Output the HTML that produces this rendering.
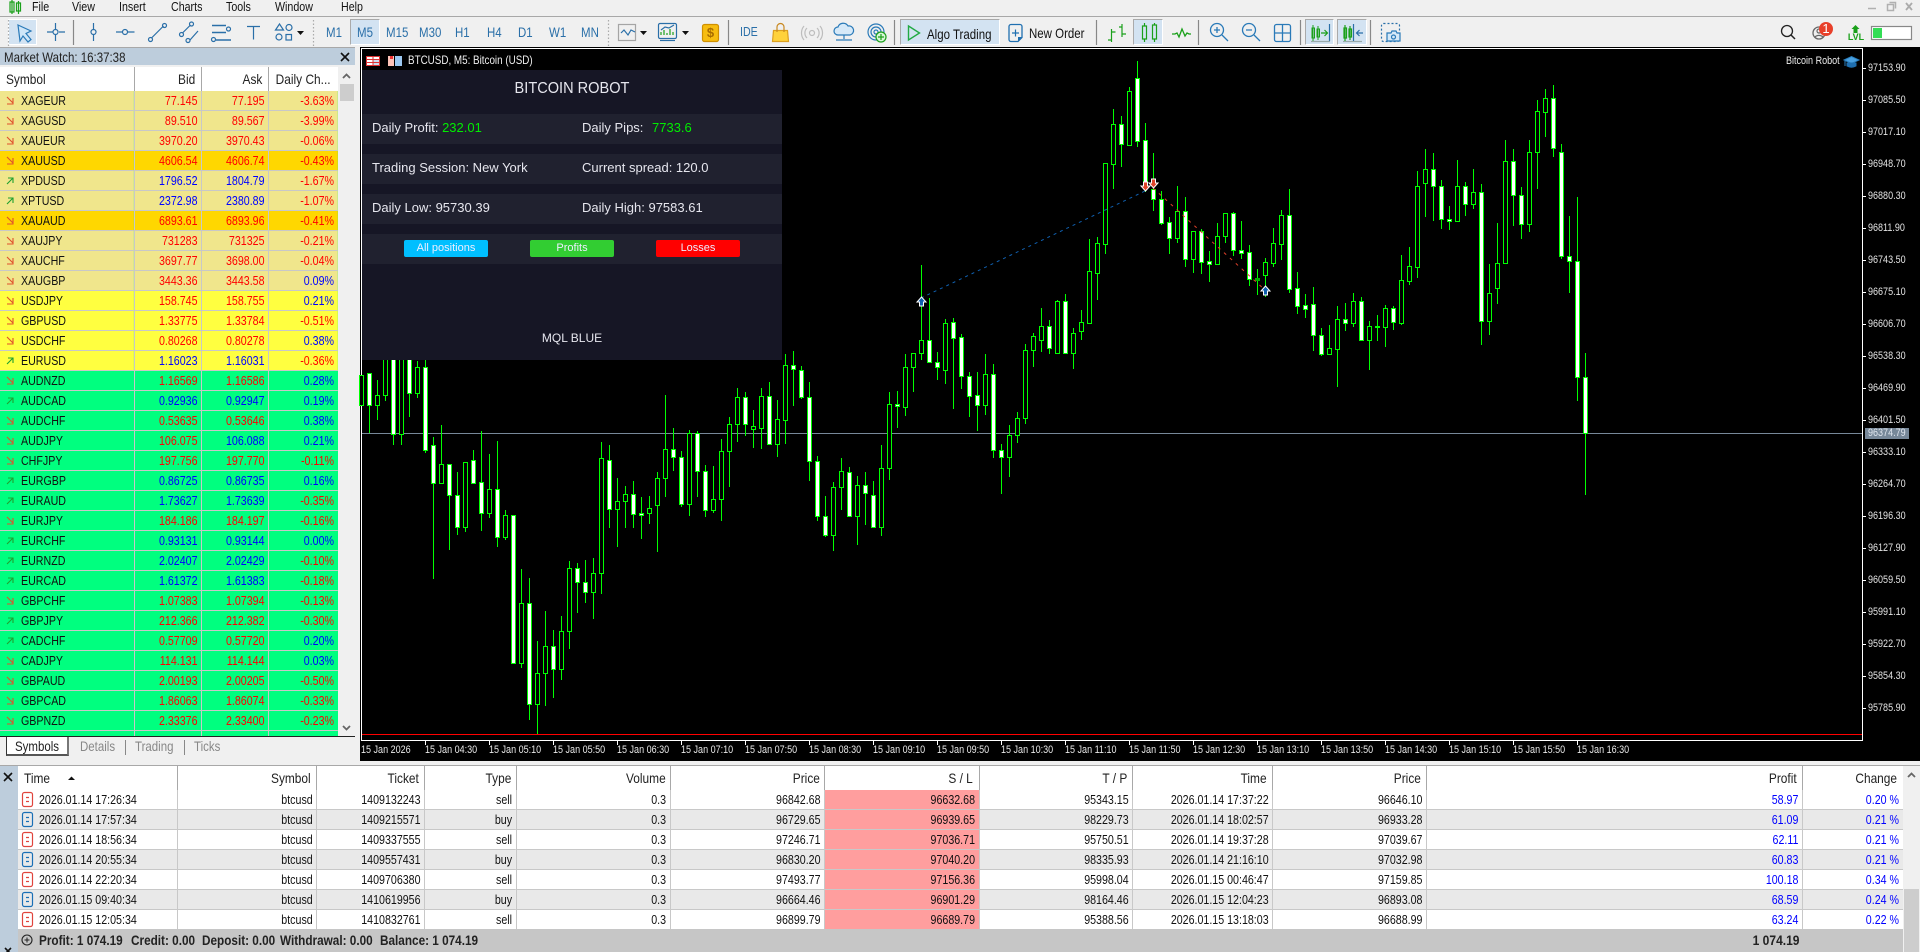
<!DOCTYPE html>
<html><head><meta charset="utf-8"><title>MT5</title>
<style>
html,body{margin:0;padding:0;width:1920px;height:952px;overflow:hidden;background:#f0f0f0;font-family:"Liberation Sans",Arial,sans-serif;color:#111}
.ab{position:absolute}
.t{position:absolute;transform-origin:0 50%;transform:scaleX(.82);white-space:nowrap;font-size:13px;line-height:16px}
.tb{color:#2a6fa8}
.tf{font-size:14px}
.sm{font-size:14px;font-weight:bold;color:#222;transform:scaleX(.84);top:932px}
.pa{position:absolute;left:1868px;transform-origin:0 50%;transform:scaleX(.82);font-size:11px;line-height:12px;color:#e4e4e4;white-space:nowrap}
.ta{position:absolute;top:744px;transform-origin:0 50%;transform:scaleX(.82);font-size:11px;line-height:12px;color:#e8e8e8;white-space:nowrap}
.p{position:absolute;font-size:13px;line-height:16px;color:#e6e6ee;white-space:nowrap}
.p b{font-weight:normal;color:#0e0}
.rw{position:absolute;left:362px;width:420px;height:30px;background:#20212f}
.bn{position:absolute;top:240px;width:84px;height:17px;line-height:17px;text-align:center;font-size:11px;color:#eef;border-radius:2px}
.sq{position:absolute;transform-origin:0 0;transform:scaleX(.82);table-layout:fixed;border-collapse:separate;border-spacing:0;font-size:13px}
.sq td{height:19px;line-height:18px;padding:0 4.9px 0 0;border-bottom:1px solid #c8c8c8;white-space:nowrap;overflow:hidden}
#mw td:first-child{padding-left:25.6px}
#mw td+td{text-align:right}
.k td{background:#f0e68c}.g td{background:#ffd700}.y td{background:#ffff40}.s td{background:#00ff7f}
.R{color:#f00}.B{color:#00f}
#bt td{text-align:right}
#bt td:first-child{text-align:left;padding-left:25.6px}
#bt tr:nth-child(odd) td{background:#fff}
#bt tr:nth-child(even) td{background:#e9e9e9}
#bt tr:nth-child(n) td.L{background:#ff9e9e}
.hd{position:absolute;top:778px;transform-origin:100% 50%;transform:scaleX(.85);margin-top:-8px;font-size:14px;line-height:16px;color:#222;white-space:nowrap}
.ln{position:absolute;width:1px}
svg{position:absolute;left:0;top:0}
</style></head><body>

<!-- menu and toolbar -->
<div class="ab" style="left:0;top:16px;width:1920px;height:1px;background:#a8a8a8"></div>
<div class="t" style="left:32px;top:-1px">File</div>
<div class="t" style="left:72px;top:-1px">View</div>
<div class="t" style="left:119px;top:-1px">Insert</div>
<div class="t" style="left:171px;top:-1px">Charts</div>
<div class="t" style="left:226px;top:-1px">Tools</div>
<div class="t" style="left:275px;top:-1px">Window</div>
<div class="t" style="left:341px;top:-1px">Help</div>

<div class="ab" style="left:8px;top:19px;width:29px;height:26px;background:#d3e3f2;border:1px solid #fff;box-sizing:border-box"></div>
<div class="ab" style="left:350px;top:19px;width:30px;height:26px;background:#d3e3f2;border:1px solid #fff;border-left-color:#aaa;border-top-color:#aaa;box-sizing:border-box"></div>
<div class="ab" style="left:900px;top:19px;width:100px;height:26px;background:#d3e3f2;border:1px solid #fff;border-left-color:#aaa;border-top-color:#aaa;box-sizing:border-box"></div>
<div class="ab" style="left:1133px;top:19px;width:30px;height:26px;background:#d3e3f2;border:1px solid #fff;border-left-color:#aaa;border-top-color:#aaa;box-sizing:border-box"></div>
<div class="ab" style="left:1305px;top:19px;width:29px;height:26px;background:#d3e3f2;border:1px solid #fff;border-left-color:#aaa;border-top-color:#aaa;box-sizing:border-box"></div>
<div class="ab" style="left:1337px;top:19px;width:30px;height:26px;background:#d3e3f2;border:1px solid #fff;border-left-color:#aaa;border-top-color:#aaa;box-sizing:border-box"></div>

<div class="t tb tf" style="left:326px;top:24px">M1</div>
<div class="t tb tf" style="left:357px;top:24px">M5</div>
<div class="t tb tf" style="left:386px;top:24px">M15</div>
<div class="t tb tf" style="left:419px;top:24px">M30</div>
<div class="t tb tf" style="left:455px;top:24px">H1</div>
<div class="t tb tf" style="left:487px;top:24px">H4</div>
<div class="t tb tf" style="left:518px;top:24px">D1</div>
<div class="t tb tf" style="left:549px;top:24px">W1</div>
<div class="t tb tf" style="left:581px;top:24px">MN</div>
<div class="t tb" style="left:740px;top:24px">IDE</div>
<div class="t" style="left:927px;top:26px;font-size:14px">Algo Trading</div>
<div class="t" style="left:1029px;top:25px;font-size:14px">New Order</div>

<svg width="1920" height="48" fill="none" stroke-width="1.2">
<!-- logo -->
<g stroke="#1aa01a"><path d="M10 2h4v10h-4zM12 0v14M16.500 3h4v8h-4zM18.500 1v13"/></g>
<!-- grips -->
<path d="M8.500 20v26M313.500 20v26M608.500 20v26" stroke="#aaa" stroke-dasharray="1.500 2"/>
<!-- seps -->
<path d="M73.500 20v25M728.500 20v25M894.500 20v25M1096.500 20v25M1198.500 20v25M1300.500 20v25M1370.500 20v25" stroke="#888"/>
<!-- cursor -->
<path d="M18 25l13 6-5 2.500 5 6-3 2.500-5-6-3 5z" stroke="#2a7ab8" fill="#cfe6f8"/>
<g stroke="#2a6fa8">
<path d="M47 32h6M59 32h6M55.500 23v6M55.500 35v6"/><circle cx="55.500" cy="32" r="2.500"/>
<path d="M93.500 23v6.500M93.500 34.500v6.500"/><circle cx="93.500" cy="32" r="2.500"/>
<path d="M116 32h6.500M127.500 32h7"/><circle cx="125" cy="32" r="2.500"/>
<path d="M151.500 38l12-12"/><circle cx="150.500" cy="39.500" r="2"/><circle cx="164.500" cy="25.500" r="2"/>
<path d="M182.500 33l8-8M190 40l8-9"/><circle cx="181.500" cy="34.500" r="2"/><circle cx="191.500" cy="24" r="2"/><circle cx="188" cy="40.500" r="2"/>
<path d="M212 25.500h14M212 32.500h14M216 40h15" stroke-width="1.500"/><circle cx="228.500" cy="29" r="2"/><circle cx="213.500" cy="39.500" r="2"/>
<path d="M247 26.500h13M253.500 26.500v13"/>
<path d="M275.500 30l4-6 4 6z"/><circle cx="289" cy="27.500" r="3"/><circle cx="279" cy="37" r="3"/><rect x="286" y="34.500" width="5.500" height="5.500"/>
</g>
<path d="M297 31h7l-3.500 4zM640 31h7l-3.500 4zM682 31h7l-3.500 4z" fill="#111" stroke="none"/>
<!-- chart icons -->
<rect x="618.500" y="24.500" width="17" height="16" stroke="#a5a5a5"/><path d="M621 33l3-3 4 5 3-5 4 2" stroke="#2a6fa8"/>
<rect x="658.500" y="23.500" width="18" height="15" rx="1.500" stroke="#2a6fa8"/><path d="M661 35v-3M664 35v-5M667 35v-2M670 35v-6M673 35v-3" stroke="#1aa01a"/><path d="M661 30l4-3 4 1 5-3" stroke="#2a6fa8"/><path d="M660 40.500h15" stroke="#2a6fa8"/>
<rect x="702.500" y="24.500" width="16" height="17" rx="2" fill="#f7bd10" stroke="#d09000"/>
<path d="M773.500 30.500h14l1 11h-16z" fill="#ffd23c" stroke="#dca020"/><path d="M777 32v-5a3.500 3.500 0 0 1 7 0v5" stroke="#c88820"/>
<g stroke="#bdbdbd"><circle cx="812" cy="33" r="2.500"/><path d="M807 28a7 7 0 0 0 0 10M817 28a7 7 0 0 1 0 10M804 26a11 11 0 0 0 0 14M820 26a11 11 0 0 1 0 14"/></g>
<g stroke="#2a7ab8"><path d="M838 35a4 4 0 0 1 0-8 5.500 5.500 0 0 1 10-1 4.500 4.500 0 0 1 2 9z" fill="#d6e9f8"/><path d="M844 35v4M836 40h16"/></g>
<g stroke="#2a7ab8"><circle cx="876" cy="32" r="8"/><circle cx="876" cy="32" r="5"/><circle cx="876" cy="32" r="2"/></g>
<circle cx="881" cy="37" r="5" fill="#d8f5d8" stroke="#1aa01a"/><path d="M878 37h6M881 34v6" stroke="#1aa01a"/>
<path d="M908.500 26l11 7-11 7z" stroke="#22aa44" stroke-width="1.400"/>
<path d="M1011 24.500h9a2 2 0 0 1 2 2v11l-4 4h-7a2 2 0 0 1-2-2v-13a2 2 0 0 1 2-2z" stroke="#1f6fb0" stroke-width="1.300"/><path d="M1012 33h7M1015.500 29.500v7" stroke="#1f6fb0"/><path d="M1018 41l4-4h-4z" fill="#1f6fb0" stroke="none"/>
<g stroke="#1aa01a"><path d="M1111.500 29v13M1108 40h3.500M1111.500 32h4M1122 24v13M1119 27h3M1122 34h4"/>
<path d="M1143 27h4v13h-4zM1153 26h4v14h-4zM1145 24v3M1145 40v3M1155 24v2M1155 40v3" transform="translate(-.5 -1)"/>
<path d="M1172 34h3l2-1 2 4 3-8 3 7 2-3 2 1h2" stroke-width="1.300"/></g>
<g stroke="#2a7ab8" stroke-width="1.300"><circle cx="1217" cy="30" r="6.500"/><path d="M1214 30h6M1217 27v6M1222 35l6 6"/><circle cx="1249" cy="30" r="6.500"/><path d="M1246 30h6M1254 35l6 6"/>
<rect x="1274.500" y="24.500" width="16" height="17" rx="2"/><path d="M1274.500 33h16M1282.500 24.500v17"/></g>
<g stroke="#1aa01a"><path d="M1312 28h2.500v10h-2.500zM1317 29h2.500v8h-2.500zM1313 25v16M1318 26v14" stroke-width="1"/><path d="M1321 33h6M1324.500 30l3 3-3 3"/></g>
<path d="M1329.500 24v17" stroke="#2a6fa8"/><path d="M1311 41.500h19M1343 41.500h19" stroke="#9aa"/>
<g stroke="#1aa01a"><path d="M1344 28h2.500v10H1344zM1349 29h2.500v8H1349zM1345 25v16M1350 26v14"/></g>
<path d="M1353.500 24v17M1363 33h-6M1359.500 30l-3 3 3 3" stroke="#2a6fa8"/>
<rect x="1381.500" y="23.500" width="18" height="18" rx="2" stroke="#2a6fa8" stroke-dasharray="2 2"/>
<path d="M1387 33h4l1-2h4l1 2h3v8h-13z" fill="#d6e9f8" stroke="#2a7ab8"/><circle cx="1393.500" cy="37" r="2" stroke="#2a7ab8"/>
<!-- right -->
<circle cx="1787" cy="31" r="5.500" stroke="#222" stroke-width="1.300"/><path d="M1791 35l4 4" stroke="#222" stroke-width="1.500"/>
<circle cx="1819" cy="33" r="6" stroke="#666" stroke-width="1.300"/><circle cx="1819" cy="31" r="2" stroke="#666"/><path d="M1815 37a5 4 0 0 1 8 0" stroke="#666"/>
<circle cx="1826" cy="29" r="7" fill="#e8402a"/>
<path d="M1855.500 25l4 4h-2v4h-4v-4h-2z" fill="#1aa01a" stroke="none"/>
<rect x="1871.500" y="26.500" width="40" height="13" fill="#fff" stroke="#888"/><rect x="1873" y="28" width="9" height="10" fill="#3d5" />
<path d="M1868 8.500h8M1887.500 4.500h6v6h-6zM1889.500 2.500h6v6" stroke="#b0b0b0" stroke-width="1.500"/><path d="M1906 3l6 7M1912 3l-6 7" stroke="#aaa" stroke-width="1.800"/>
</svg>
<div class="ab" style="left:702px;top:24px;width:17px;height:18px;line-height:18px;text-align:center;font-size:13px;font-weight:bold;color:#a86c00">$</div>
<div class="ab" style="left:1819px;top:21px;width:14px;height:16px;line-height:16px;text-align:center;font-size:13px;color:#fff">1</div>
<div class="ab" style="left:1846px;top:32px;width:20px;height:10px;line-height:10px;text-align:center;font-size:9px;color:#1aa01a;font-weight:bold">LVL</div>

<!-- market watch -->
<div class="ab" style="left:0;top:47px;width:355px;height:1px;background:#a8a8a8"></div>
<div class="ab" style="left:0;top:48px;width:355px;height:17px;background:#bdcddc"></div>
<div class="t" style="left:4px;top:49px;color:#222;font-size:14px">Market Watch: 16:37:38</div>
<svg width="360" height="70"><path d="M341 53l8 8M349 53l-8 8" stroke="#111" stroke-width="1.600"/></svg>
<div class="ab" style="left:0;top:67px;width:338px;height:24px;background:#fff"></div>
<div class="t tf" style="left:6px;top:71px;color:#222;transform:scaleX(.85)">Symbol</div>
<div class="hd" style="right:1725px;top:79px">Bid</div>
<div class="hd" style="right:1658px;top:79px">Ask</div>
<div class="hd" style="right:1589px;top:79px">Daily Ch...</div>
<div class="ab" style="left:338px;top:67px;width:17px;height:669px;background:#f0f0f0"></div>
<div class="ab" style="left:340px;top:84px;width:14px;height:17px;background:#cdcdcd"></div>
<svg width="360" height="740" fill="none"><path d="M343 78l3.500-3.500 3.500 3.500M343 726l3.500 3.500 3.500-3.500" stroke="#666" stroke-width="1.800"/></svg>
<div class="ab" style="left:0;top:91px;width:338px;height:645px;overflow:hidden;background:#00ff7f">
<table id="mw" class="sq" style="left:0;top:0;width:412.2px">
<colgroup><col style="width:163.4px"><col style="width:82.4px"><col style="width:81.7px"><col style="width:84.7px"></colgroup>
<tr class="k"><td>XAGEUR<td class="R">77.145<td class="R">77.195<td class="R">-3.63%</tr>
<tr class="k"><td>XAGUSD<td class="R">89.510<td class="R">89.567<td class="R">-3.99%</tr>
<tr class="k"><td>XAUEUR<td class="R">3970.20<td class="R">3970.43<td class="R">-0.06%</tr>
<tr class="g"><td>XAUUSD<td class="R">4606.54<td class="R">4606.74<td class="R">-0.43%</tr>
<tr class="k"><td>XPDUSD<td class="B">1796.52<td class="B">1804.79<td class="R">-1.67%</tr>
<tr class="k"><td>XPTUSD<td class="B">2372.98<td class="B">2380.89<td class="R">-1.07%</tr>
<tr class="g"><td>XAUAUD<td class="R">6893.61<td class="R">6893.96<td class="R">-0.41%</tr>
<tr class="k"><td>XAUJPY<td class="R">731283<td class="R">731325<td class="R">-0.21%</tr>
<tr class="k"><td>XAUCHF<td class="R">3697.77<td class="R">3698.00<td class="R">-0.04%</tr>
<tr class="k"><td>XAUGBP<td class="R">3443.36<td class="R">3443.58<td class="B">0.09%</tr>
<tr class="y"><td>USDJPY<td class="R">158.745<td class="R">158.755<td class="B">0.21%</tr>
<tr class="y"><td>GBPUSD<td class="R">1.33775<td class="R">1.33784<td class="R">-0.51%</tr>
<tr class="y"><td>USDCHF<td class="R">0.80268<td class="R">0.80278<td class="B">0.38%</tr>
<tr class="y"><td>EURUSD<td class="B">1.16023<td class="B">1.16031<td class="R">-0.36%</tr>
<tr class="s"><td>AUDNZD<td class="R">1.16569<td class="R">1.16586<td class="B">0.28%</tr>
<tr class="s"><td>AUDCAD<td class="B">0.92936<td class="B">0.92947<td class="B">0.19%</tr>
<tr class="s"><td>AUDCHF<td class="R">0.53635<td class="R">0.53646<td class="B">0.38%</tr>
<tr class="s"><td>AUDJPY<td class="R">106.075<td class="B">106.088<td class="B">0.21%</tr>
<tr class="s"><td>CHFJPY<td class="R">197.756<td class="R">197.770<td class="R">-0.11%</tr>
<tr class="s"><td>EURGBP<td class="B">0.86725<td class="B">0.86735<td class="B">0.16%</tr>
<tr class="s"><td>EURAUD<td class="B">1.73627<td class="B">1.73639<td class="R">-0.35%</tr>
<tr class="s"><td>EURJPY<td class="R">184.186<td class="R">184.197<td class="R">-0.16%</tr>
<tr class="s"><td>EURCHF<td class="B">0.93131<td class="B">0.93144<td class="B">0.00%</tr>
<tr class="s"><td>EURNZD<td class="B">2.02407<td class="B">2.02429<td class="R">-0.10%</tr>
<tr class="s"><td>EURCAD<td class="B">1.61372<td class="B">1.61383<td class="R">-0.18%</tr>
<tr class="s"><td>GBPCHF<td class="R">1.07383<td class="R">1.07394<td class="R">-0.13%</tr>
<tr class="s"><td>GBPJPY<td class="R">212.366<td class="R">212.382<td class="R">-0.30%</tr>
<tr class="s"><td>CADCHF<td class="R">0.57709<td class="R">0.57720<td class="B">0.20%</tr>
<tr class="s"><td>CADJPY<td class="R">114.131<td class="R">114.144<td class="B">0.03%</tr>
<tr class="s"><td>GBPAUD<td class="R">2.00193<td class="R">2.00205<td class="R">-0.50%</tr>
<tr class="s"><td>GBPCAD<td class="R">1.86063<td class="R">1.86074<td class="R">-0.33%</tr>
<tr class="s"><td>GBPNZD<td class="R">2.33376<td class="R">2.33400<td class="R">-0.23%</tr>
</table></div>
<div class="ln" style="left:134px;top:67px;height:24px;background:#a8a8a8"></div>
<div class="ln" style="left:201px;top:67px;height:24px;background:#a8a8a8"></div>
<div class="ln" style="left:268px;top:67px;height:24px;background:#a8a8a8"></div>
<div class="ln" style="left:134px;top:91px;height:645px;background:#c8c8c8"></div>
<div class="ln" style="left:201px;top:91px;height:645px;background:#c8c8c8"></div>
<div class="ln" style="left:268px;top:91px;height:645px;background:#c8c8c8"></div>
<svg width="360" height="740" fill="none">
<defs><path id="d" d="M7 6l6 6M13 7v6H7" stroke="#e0502c" stroke-width="1.100"/><path id="u" d="M7 13l6-6M8 7h5v5" stroke="#20a030" stroke-width="1.100"/></defs>
<use href="#d" y="91"/><use href="#d" y="111"/><use href="#d" y="131"/><use href="#d" y="151"/><use href="#u" y="171"/><use href="#u" y="191"/><use href="#d" y="211"/><use href="#d" y="231"/><use href="#d" y="251"/><use href="#d" y="271"/><use href="#d" y="291"/><use href="#d" y="311"/><use href="#d" y="331"/><use href="#u" y="351"/><use href="#d" y="371"/><use href="#u" y="391"/><use href="#d" y="411"/><use href="#d" y="431"/><use href="#d" y="451"/><use href="#u" y="471"/><use href="#u" y="491"/><use href="#d" y="511"/><use href="#u" y="531"/><use href="#u" y="551"/><use href="#u" y="571"/><use href="#d" y="591"/><use href="#u" y="611"/><use href="#u" y="631"/><use href="#d" y="651"/><use href="#d" y="671"/><use href="#d" y="691"/><use href="#d" y="711"/>
</svg>
<!-- tabs -->
<div class="ab" style="left:0;top:736px;width:355px;height:1px;background:#222"></div>
<div class="ab" style="left:6px;top:737px;width:63px;height:19px;background:#fff;border:1px solid #333;border-top:none;border-right:2px solid #777;border-bottom:2px solid #555;box-sizing:border-box"></div>
<div class="t tf" style="left:15px;top:738px;color:#222">Symbols</div>
<div class="t tf" style="left:80px;top:738px;color:#888">Details</div>
<div class="t tf" style="left:135px;top:738px;color:#888">Trading</div>
<div class="t tf" style="left:194px;top:738px;color:#888">Ticks</div>
<div class="ln" style="left:125px;top:740px;height:15px;background:#888"></div>
<div class="ln" style="left:184px;top:740px;height:15px;background:#888"></div>

<!-- chart -->
<div class="ab" style="left:360px;top:47px;width:1560px;height:714px;background:#000"></div>
<div class="ab" style="left:361px;top:48px;width:1502px;height:1px;background:#fff"></div>
<div class="ab" style="left:361px;top:48px;width:1px;height:693px;background:#fff"></div>
<div class="ab" style="left:1862px;top:48px;width:1px;height:693px;background:#fff"></div>
<div class="ab" style="left:361px;top:740px;width:1502px;height:1px;background:#fff"></div>
<div class="ab" style="left:362px;top:734px;width:1500px;height:1px;background:#f00"></div>
<div class="ab" style="left:362px;top:433px;width:1500px;height:1px;background:#778899"></div>

<svg width="1920" height="761" fill="none" stroke="#0f0">
<path d="M361.500 375V405M369.500 373V433M377.500 380V420M385.500 300V401M393.500 300V445M401.500 300V445M409.500 300V417M417.500 361V398M425.500 360V453M433.500 437V579M441.500 425V483M449.500 464V550M457.500 472V535M465.500 462V532M473.500 450V483M481.500 431V531M489.500 454V518M497.500 441V547M505.500 510V540M521.500 569V668M529.500 578V720M537.500 641V734M545.500 611V706M553.500 630V698M561.500 616V680M569.500 561V649M577.500 563V613M585.500 560V603M593.500 558V619M601.500 442V594M609.500 445V528M617.500 478V547M625.500 486V528M633.500 481V528M641.500 497V539M649.500 496V524M657.500 472V552M665.500 395V497M673.500 428V471M681.500 451V507M689.500 430V516M697.500 431V497M705.500 465V517M713.500 466V513M721.500 439V521M729.500 417V487M737.500 388V442M745.500 392V436M753.500 410V448M761.500 388V449M769.500 382V444M777.500 400V457M785.500 354V444M793.500 351V406M801.500 366V399M809.500 382V481M817.500 456V521M825.500 496V537M833.500 482V551M841.500 458V510M849.500 467V516M857.500 476V545M865.500 472V525M873.500 481V528M881.500 445V536M889.500 392V480M897.500 391V428M905.500 354V416M913.500 353V392M921.500 265V360M929.500 298V363M937.500 352V380M945.500 319V384M953.500 318V409M961.500 334V389M969.500 372V417M977.500 372V431M985.500 354V415M993.500 364V458M1001.500 444V494M1009.500 425V477M1017.500 412V443M1025.500 344V424M1033.500 333V367M1041.500 308V352M1049.500 320V354M1057.500 300V353M1065.500 294V354M1073.500 328V369M1081.500 310V340M1089.500 239V323M1097.500 237V300M1105.500 163V254M1113.500 109V189M1121.500 116V167M1129.500 87V146M1137.500 61V147M1145.500 123V192M1153.500 153V211M1161.500 191V225M1169.500 217V254M1177.500 186V243M1185.500 197V267M1193.500 231V273M1201.500 229V274M1209.500 251V282M1217.500 223V265M1225.500 213V243M1233.500 212V256M1241.500 221V259M1249.500 245V286M1257.500 269V295M1265.500 258V297M1273.500 228V267M1281.500 210V260M1289.500 189V293M1297.500 272V314M1305.500 294V318M1313.500 287V351M1321.500 328V356M1329.500 325V355M1337.500 306V387M1345.500 303V331M1353.500 293V327M1361.500 297V341M1369.500 321V370M1377.500 315V341M1385.500 305V347M1393.500 306V330M1401.500 255V325M1409.500 247V285M1417.500 171V278M1425.500 149V217M1433.500 153V221M1441.500 180V229M1449.500 206V230M1457.500 160V222M1465.500 182V216M1473.500 169V209M1481.500 184V345M1489.500 264V335M1497.500 223V304M1505.500 140V263M1513.500 149V226M1521.500 187V239M1529.500 140V232M1537.500 100V189M1545.500 89V137M1553.500 85V157M1561.500 144V259M1569.500 216V293M1577.500 197V401M1585.500 353V495"/>
<path fill="#000" d="M359.500 375.500h4V405.500h-4zM375.500 395.500h4V405.500h-4zM383.500 300.500h4V395.500h-4zM399.500 300.500h4V434.500h-4zM415.500 367.500h4V393.500h-4zM439.500 464.500h4V483.500h-4zM463.500 462.500h4V527.500h-4zM487.500 489.500h4V513.500h-4zM503.500 515.500h4V537.500h-4zM519.500 603.500h4V663.500h-4zM535.500 673.500h4V704.500h-4zM543.500 646.500h4V673.500h-4zM559.500 631.500h4V669.500h-4zM567.500 568.500h4V631.500h-4zM591.500 573.500h4V592.500h-4zM599.500 458.500h4V573.500h-4zM615.500 501.500h4V509.500h-4zM623.500 494.500h4V501.500h-4zM647.500 508.500h4V513.500h-4zM655.500 478.500h4V505.500h-4zM663.500 449.500h4V478.500h-4zM687.500 433.500h4V504.500h-4zM711.500 499.500h4V510.500h-4zM719.500 451.500h4V499.500h-4zM727.500 424.500h4V451.500h-4zM735.500 397.500h4V424.500h-4zM751.500 426.500h4V429.500h-4zM759.500 396.500h4V428.500h-4zM775.500 419.500h4V444.500h-4zM783.500 365.500h4V420.500h-4zM831.500 487.500h4V535.500h-4zM839.500 471.500h4V487.500h-4zM855.500 485.500h4V516.500h-4zM879.500 468.500h4V527.500h-4zM887.500 404.500h4V468.500h-4zM903.500 367.500h4V407.500h-4zM911.500 353.500h4V367.500h-4zM919.500 340.500h4V353.500h-4zM943.500 323.500h4V370.500h-4zM983.500 374.500h4V405.500h-4zM1007.500 435.500h4V457.500h-4zM1015.500 418.500h4V435.500h-4zM1023.500 350.500h4V418.500h-4zM1031.500 336.500h4V350.500h-4zM1039.500 326.500h4V340.500h-4zM1055.500 301.500h4V353.500h-4zM1071.500 333.500h4V353.500h-4zM1079.500 322.500h4V331.500h-4zM1087.500 271.500h4V323.500h-4zM1095.500 243.500h4V273.500h-4zM1103.500 163.500h4V244.500h-4zM1111.500 124.500h4V164.500h-4zM1127.500 91.500h4V145.500h-4zM1175.500 211.500h4V238.500h-4zM1191.500 231.500h4V259.500h-4zM1215.500 236.500h4V264.500h-4zM1223.500 213.500h4V236.500h-4zM1263.500 262.500h4V275.500h-4zM1271.500 243.500h4V263.500h-4zM1279.500 215.500h4V244.500h-4zM1327.500 348.500h4V354.500h-4zM1335.500 319.500h4V349.500h-4zM1351.500 301.500h4V323.500h-4zM1367.500 326.500h4V340.500h-4zM1383.500 308.500h4V327.500h-4zM1399.500 280.500h4V323.500h-4zM1407.500 266.500h4V281.500h-4zM1415.500 186.500h4V267.500h-4zM1423.500 169.500h4V183.500h-4zM1455.500 186.500h4V221.500h-4zM1471.500 192.500h4V204.500h-4zM1487.500 293.500h4V321.500h-4zM1495.500 263.500h4V288.500h-4zM1503.500 161.500h4V263.500h-4zM1527.500 152.500h4V224.500h-4zM1535.500 111.500h4V152.500h-4zM1543.500 98.500h4V112.500h-4z"/>
<path fill="#fff" d="M367.500 373.500h4V405.500h-4zM391.500 300.500h4V434.500h-4zM407.500 300.500h4V393.500h-4zM423.500 367.500h4V450.500h-4zM431.500 445.500h4V483.500h-4zM447.500 464.500h4V495.500h-4zM455.500 495.500h4V527.500h-4zM471.500 460.500h4V483.500h-4zM479.500 482.500h4V513.500h-4zM495.500 489.500h4V537.500h-4zM511.500 515.500h4V663.500h-4zM527.500 603.500h4V704.500h-4zM551.500 646.500h4V669.500h-4zM575.500 568.500h4V582.500h-4zM583.500 582.500h4V592.500h-4zM607.500 460.500h4V509.500h-4zM631.500 494.500h4V514.500h-4zM639.500 513.500h4V515.500h-4zM671.500 449.500h4V457.500h-4zM679.500 457.500h4V504.500h-4zM695.500 433.500h4V471.500h-4zM703.500 471.500h4V510.500h-4zM743.500 397.500h4V424.500h-4zM767.500 396.500h4V444.500h-4zM791.500 365.500h4V369.500h-4zM799.500 370.500h4V397.500h-4zM807.500 397.500h4V461.500h-4zM815.500 461.500h4V516.500h-4zM823.500 516.500h4V535.500h-4zM847.500 472.500h4V516.500h-4zM863.500 485.500h4V493.500h-4zM871.500 495.500h4V527.500h-4zM895.500 404.500h4V406.500h-4zM927.500 340.500h4V362.500h-4zM935.500 362.500h4V367.500h-4zM951.500 322.500h4V338.500h-4zM959.500 337.500h4V376.500h-4zM967.500 376.500h4V396.500h-4zM975.500 395.500h4V405.500h-4zM991.500 374.500h4V450.500h-4zM999.500 450.500h4V457.500h-4zM1047.500 326.500h4V348.500h-4zM1063.500 301.500h4V353.500h-4zM1119.500 124.500h4V144.500h-4zM1135.500 78.500h4V141.500h-4zM1143.500 140.500h4V183.500h-4zM1151.500 189.500h4V199.500h-4zM1159.500 199.500h4V223.500h-4zM1167.500 222.500h4V238.500h-4zM1183.500 211.500h4V259.500h-4zM1199.500 231.500h4V262.500h-4zM1207.500 261.500h4V264.500h-4zM1231.500 213.500h4V250.500h-4zM1239.500 250.500h4V253.500h-4zM1247.500 252.500h4V279.500h-4zM1287.500 215.500h4V289.500h-4zM1295.500 288.500h4V306.500h-4zM1303.500 305.500h4V309.500h-4zM1311.500 304.500h4V335.500h-4zM1319.500 335.500h4V354.500h-4zM1343.500 319.500h4V323.500h-4zM1359.500 301.500h4V340.500h-4zM1375.500 326.500h4V327.500h-4zM1391.500 308.500h4V322.500h-4zM1431.500 169.500h4V186.500h-4zM1439.500 186.500h4V219.500h-4zM1447.500 219.500h4V221.500h-4zM1463.500 186.500h4V204.500h-4zM1479.500 192.500h4V321.500h-4zM1511.500 161.500h4V195.500h-4zM1519.500 195.500h4V224.500h-4zM1551.500 98.500h4V148.500h-4zM1559.500 152.500h4V256.500h-4zM1567.500 256.500h4V261.500h-4zM1575.500 261.500h4V377.500h-4zM1583.500 377.500h4V433.500h-4z"/>
<rect x="1255" y="278" width="5" height="3" fill="#0a0" stroke="none"/>
<path d="M921 298L1145 191" stroke="#1060b0" stroke-dasharray="3 4"/>
<path d="M1153 188L1265 290" stroke="#e0402a" stroke-dasharray="3 5"/>
<g stroke="#fff"><path d="M921.500 297l4.500 5h-2.500v4h-4v-4H917z" fill="#0f5fae"/><path d="M1265.500 286l4.500 5h-2.500v4h-4v-4H1261z" fill="#0f5fae"/><path d="M1145.500 191l4.500-5h-2.500v-4h-4v4H1141z" fill="#e0462a"/><path d="M1153.500 188l4.500-5h-2.500v-4h-4v4H1149z" fill="#e0462a"/></g>
<!-- axis ticks -->
<path stroke="#fff" d="M1863 68.500h3M1863 100.500h3M1863 132.500h3M1863 164.500h3M1863 196.500h3M1863 228.500h3M1863 260.500h3M1863 292.500h3M1863 324.500h3M1863 356.500h3M1863 388.500h3M1863 420.500h3M1863 452.500h3M1863 484.500h3M1863 516.500h3M1863 548.500h3M1863 580.500h3M1863 612.500h3M1863 644.500h3M1863 676.500h3M1863 708.500h3"/>
<path stroke="#fff" d="M425.500 741v4M489.500 741v4M553.500 741v4M617.500 741v4M681.500 741v4M745.500 741v4M809.500 741v4M873.500 741v4M937.500 741v4M1001.500 741v4M1065.500 741v4M1129.500 741v4M1193.500 741v4M1257.500 741v4M1321.500 741v4M1385.500 741v4M1449.500 741v4M1513.500 741v4M1577.500 741v4"/>
<!-- title icons -->
<g stroke="none"><rect x="366" y="56" width="14" height="10" fill="#d33"/><rect x="367" y="57" width="5.500" height="2" fill="#fff"/><rect x="373.500" y="57" width="5.500" height="2" fill="#fff"/><rect x="367" y="60" width="5.500" height="2" fill="#fff"/><rect x="373.500" y="60" width="5.500" height="2" fill="#cde"/><rect x="367" y="63" width="5.500" height="2" fill="#fff"/><rect x="373.500" y="63" width="5.500" height="2" fill="#cde"/>
<rect x="388" y="56" width="6" height="10" fill="#ffc4b8"/><rect x="395" y="56" width="7" height="10" fill="#9cc8f0"/><rect x="390" y="56" width="3" height="3" fill="#e33"/></g>
<!-- cap -->
<path d="M1844 60l7.500-3.500 7.500 3.500-7.500 3.500z" fill="#4aa0e0" stroke="#2a80c0"/><path d="M1847 62.500v3.500q4.500 2.500 9 0v-3.500" fill="#1f6fb0" stroke="#1f6fb0"/><path d="M1845 61v5" stroke="#2a80c0"/>
</svg>

<!-- panel -->
<div class="ab" style="left:362px;top:70px;width:420px;height:290px;background:#161625"></div>
<div class="rw" style="top:114px"></div><div class="rw" style="top:154px"></div><div class="rw" style="top:194px"></div><div class="rw" style="top:234px"></div>
<div class="ab" style="left:362px;top:79px;width:420px;text-align:center;font-size:16px;line-height:20px;color:#e6e6ee;transform:scaleX(.91)">BITCOIN ROBOT</div>
<div class="p" style="left:372px;top:120px">Daily Profit: <b>232.01</b></div>
<div class="p" style="left:582px;top:120px">Daily Pips:</div><div class="p" style="left:652px;top:120px"><b>7733.6</b></div>
<div class="p" style="left:372px;top:160px">Trading Session: New York</div>
<div class="p" style="left:582px;top:160px">Current spread: 120.0</div>
<div class="p" style="left:372px;top:200px">Daily Low: 95730.39</div>
<div class="p" style="left:582px;top:200px">Daily High: 97583.61</div>
<div class="bn" style="left:404px;background:#00bfff">All positions</div>
<div class="bn" style="left:530px;background:#32cd32">Profits</div>
<div class="bn" style="left:656px;background:#f00">Losses</div>
<div class="ab" style="left:362px;top:331px;width:420px;text-align:center;font-size:12px;line-height:14px;color:#e6e6ee">MQL BLUE</div>

<!-- chart text -->
<div class="t" style="left:408px;top:52px;color:#f0f0f0;font-size:12px">BTCUSD, M5:  Bitcoin (USD)</div>
<div class="t" style="left:1786px;top:53px;color:#eee;font-size:11px">Bitcoin Robot</div>
<div class="pa" style="top:62px">97153.90</div><div class="pa" style="top:94px">97085.50</div><div class="pa" style="top:126px">97017.10</div><div class="pa" style="top:158px">96948.70</div><div class="pa" style="top:190px">96880.30</div><div class="pa" style="top:222px">96811.90</div><div class="pa" style="top:254px">96743.50</div><div class="pa" style="top:286px">96675.10</div><div class="pa" style="top:318px">96606.70</div><div class="pa" style="top:350px">96538.30</div><div class="pa" style="top:382px">96469.90</div><div class="pa" style="top:414px">96401.50</div><div class="pa" style="top:446px">96333.10</div><div class="pa" style="top:478px">96264.70</div><div class="pa" style="top:510px">96196.30</div><div class="pa" style="top:542px">96127.90</div><div class="pa" style="top:574px">96059.50</div><div class="pa" style="top:606px">95991.10</div><div class="pa" style="top:638px">95922.70</div><div class="pa" style="top:670px">95854.30</div><div class="pa" style="top:702px">95785.90</div>
<div class="ab" style="left:1865px;top:428px;width:44px;height:11px;background:#778899"></div>
<div class="pa" style="top:427px;color:#dfe6ee">96374.79</div>
<div class="ta" style="left:361px">15 Jan 2026</div><div class="ta" style="left:425px">15 Jan 04:30</div><div class="ta" style="left:489px">15 Jan 05:10</div><div class="ta" style="left:553px">15 Jan 05:50</div><div class="ta" style="left:617px">15 Jan 06:30</div><div class="ta" style="left:681px">15 Jan 07:10</div><div class="ta" style="left:745px">15 Jan 07:50</div><div class="ta" style="left:809px">15 Jan 08:30</div><div class="ta" style="left:873px">15 Jan 09:10</div><div class="ta" style="left:937px">15 Jan 09:50</div><div class="ta" style="left:1001px">15 Jan 10:30</div><div class="ta" style="left:1065px">15 Jan 11:10</div><div class="ta" style="left:1129px">15 Jan 11:50</div><div class="ta" style="left:1193px">15 Jan 12:30</div><div class="ta" style="left:1257px">15 Jan 13:10</div><div class="ta" style="left:1321px">15 Jan 13:50</div><div class="ta" style="left:1385px">15 Jan 14:30</div><div class="ta" style="left:1449px">15 Jan 15:10</div><div class="ta" style="left:1513px">15 Jan 15:50</div><div class="ta" style="left:1577px">15 Jan 16:30</div>

<!-- bottom panel -->
<div class="ab" style="left:0;top:765px;width:1920px;height:1px;background:#a8a8a8"></div>
<div class="ab" style="left:0;top:766px;width:18px;height:186px;background:#bdcddc"></div>
<div class="ab" style="left:18px;top:766px;width:1885px;height:24px;background:#fff"></div>
<div class="t tf" style="left:24px;top:770px;color:#222;transform:scaleX(.85)">Time</div>
<div class="hd" style="right:1609px">Symbol</div>
<div class="hd" style="right:1501px">Ticket</div>
<div class="hd" style="right:1409px">Type</div>
<div class="hd" style="right:1254px">Volume</div>
<div class="hd" style="right:1100px">Price</div>
<div class="hd" style="right:947px">S / L</div>
<div class="hd" style="right:793px">T / P</div>
<div class="hd" style="right:653px">Time</div>
<div class="hd" style="right:499px">Price</div>
<div class="hd" style="right:123px">Profit</div>
<div class="hd" style="right:23px">Change</div>
<div class="ab" style="left:18px;top:790px;width:1885px;height:139px;overflow:hidden;background:#fff">
<table id="bt" class="sq" style="left:0;top:0;width:2298.8px">
<colgroup><col style="width:194.5px"><col style="width:169.8px"><col style="width:131.5px"><col style="width:111.6px"><col style="width:187.8px"><col style="width:188.4px"><col style="width:188.4px"><col style="width:187.4px"><col style="width:170.7px"><col style="width:187.6px"><col style="width:458.5px"><col style="width:122.6px"></colgroup>
<tr><td>2026.01.14 17:26:34<td>btcusd<td>1409132243<td>sell<td>0.3<td>96842.68<td class="L">96632.68<td>95343.15<td>2026.01.14 17:37:22<td>96646.10<td class="B">58.97<td class="B">0.20 %</tr>
<tr><td>2026.01.14 17:57:34<td>btcusd<td>1409215571<td>buy<td>0.3<td>96729.65<td class="L">96939.65<td>98229.73<td>2026.01.14 18:02:57<td>96933.28<td class="B">61.09<td class="B">0.21 %</tr>
<tr><td>2026.01.14 18:56:34<td>btcusd<td>1409337555<td>sell<td>0.3<td>97246.71<td class="L">97036.71<td>95750.51<td>2026.01.14 19:37:28<td>97039.67<td class="B">62.11<td class="B">0.21 %</tr>
<tr><td>2026.01.14 20:55:34<td>btcusd<td>1409557431<td>buy<td>0.3<td>96830.20<td class="L">97040.20<td>98335.93<td>2026.01.14 21:16:10<td>97032.98<td class="B">60.83<td class="B">0.21 %</tr>
<tr><td>2026.01.14 22:20:34<td>btcusd<td>1409706380<td>sell<td>0.3<td>97493.77<td class="L">97156.36<td>95998.04<td>2026.01.15 00:46:47<td>97159.85<td class="B">100.18<td class="B">0.34 %</tr>
<tr><td>2026.01.15 09:40:34<td>btcusd<td>1410619956<td>buy<td>0.3<td>96664.46<td class="L">96901.29<td>98164.46<td>2026.01.15 12:04:23<td>96893.08<td class="B">68.59<td class="B">0.24 %</tr>
<tr><td>2026.01.15 12:05:34<td>btcusd<td>1410832761<td>sell<td>0.3<td>96899.79<td class="L">96689.79<td>95388.56<td>2026.01.15 13:18:03<td>96688.99<td class="B">63.24<td class="B">0.22 %</tr>
</table></div>
<div class="ab" style="left:18px;top:929px;width:1885px;height:23px;background:#c6c6c6"></div>
<div class="t sm" style="left:39px">Profit: 1 074.19</div>
<div class="t sm" style="left:131px">Credit: 0.00</div>
<div class="t sm" style="left:202px">Deposit: 0.00</div>
<div class="t sm" style="left:280px">Withdrawal: 0.00</div>
<div class="t sm" style="left:380px">Balance: 1 074.19</div>
<div class="hd" style="right:121px;top:940px;font-weight:bold;transform:scaleX(.86)">1 074.19</div>
<div class="ln" style="left:177px;top:766px;height:24px;background:#a8a8a8"></div><div class="ln" style="left:316px;top:766px;height:24px;background:#a8a8a8"></div><div class="ln" style="left:424px;top:766px;height:24px;background:#a8a8a8"></div><div class="ln" style="left:516px;top:766px;height:24px;background:#a8a8a8"></div><div class="ln" style="left:670px;top:766px;height:24px;background:#a8a8a8"></div><div class="ln" style="left:824px;top:766px;height:24px;background:#a8a8a8"></div><div class="ln" style="left:979px;top:766px;height:24px;background:#a8a8a8"></div><div class="ln" style="left:1132px;top:766px;height:24px;background:#a8a8a8"></div><div class="ln" style="left:1272px;top:766px;height:24px;background:#a8a8a8"></div><div class="ln" style="left:1426px;top:766px;height:24px;background:#a8a8a8"></div><div class="ln" style="left:1802px;top:766px;height:24px;background:#a8a8a8"></div>
<div class="ln" style="left:177px;top:790px;height:139px;background:#c8c8c8"></div><div class="ln" style="left:316px;top:790px;height:139px;background:#c8c8c8"></div><div class="ln" style="left:424px;top:790px;height:139px;background:#c8c8c8"></div><div class="ln" style="left:516px;top:790px;height:139px;background:#c8c8c8"></div><div class="ln" style="left:670px;top:790px;height:139px;background:#c8c8c8"></div><div class="ln" style="left:824px;top:790px;height:139px;background:#c8c8c8"></div><div class="ln" style="left:979px;top:790px;height:139px;background:#c8c8c8"></div><div class="ln" style="left:1132px;top:790px;height:139px;background:#c8c8c8"></div><div class="ln" style="left:1272px;top:790px;height:139px;background:#c8c8c8"></div><div class="ln" style="left:1426px;top:790px;height:139px;background:#c8c8c8"></div><div class="ln" style="left:1802px;top:790px;height:139px;background:#c8c8c8"></div>
<div class="ab" style="left:1904px;top:889px;width:15px;height:63px;background:#cdcdcd"></div>
<svg width="1920" height="952" fill="none" style="pointer-events:none">
<path d="M4 773l8 8M12 773l-8 8M5 948l6 6M11 948l-6 6" stroke="#111" stroke-width="1.600"/>
<path d="M68 780l3.500-3.500 3.500 3.500z" fill="#111"/>
<path d="M1908 777l3.500-3.500 3.500 3.500" stroke="#666" stroke-width="1.800"/>
<g stroke="#e0443c" stroke-width="1.200"><rect x="22.500" y="792.500" width="10" height="14" rx="2"/><rect x="22.500" y="832.500" width="10" height="14" rx="2"/><rect x="22.500" y="872.500" width="10" height="14" rx="2"/><rect x="22.500" y="912.500" width="10" height="14" rx="2"/><path d="M26 797.500h3M26 801.500h3M26 837.500h3M26 841.500h3M26 877.500h3M26 881.500h3M26 917.500h3M26 921.500h3"/></g>
<g stroke="#1a6fb5" stroke-width="1.200"><rect x="22.500" y="812.500" width="10" height="14" rx="2"/><rect x="22.500" y="852.500" width="10" height="14" rx="2"/><rect x="22.500" y="892.500" width="10" height="14" rx="2"/><path d="M26 817.500h3M26 821.500h3M26 857.500h3M26 861.500h3M26 897.500h3M26 901.500h3"/></g>
<circle cx="27" cy="940" r="5" stroke="#222" stroke-width="1.100"/><path d="M24.500 940h5M27 937.500v5" stroke="#222"/>
</svg>
</body></html>
